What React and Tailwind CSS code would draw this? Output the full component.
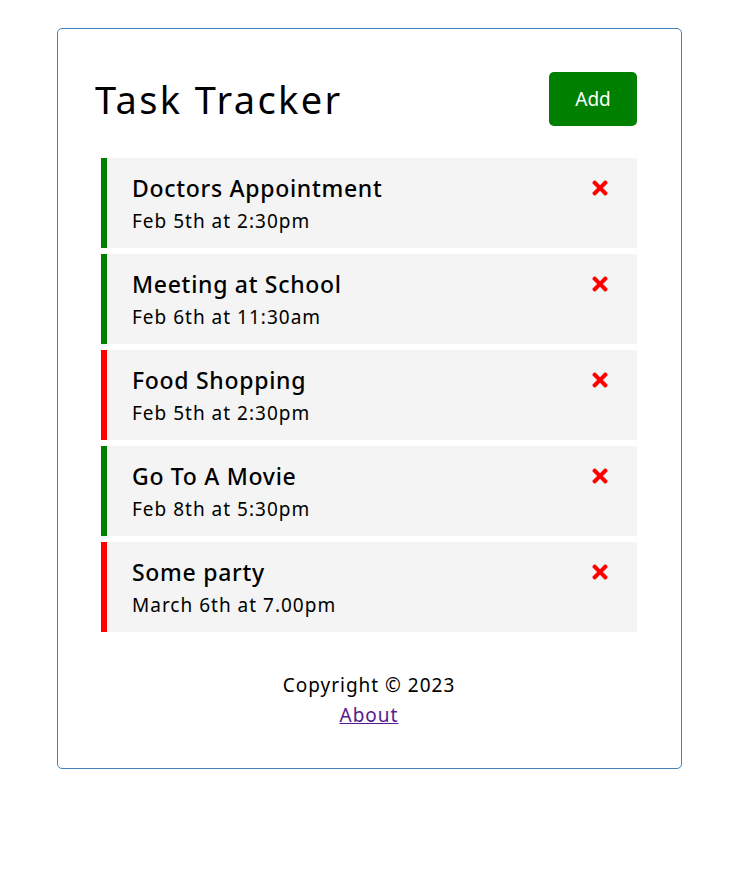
import { FaTimes } from "react-icons/fa";

const tasks = [
  { id: 1, text: "Doctors Appointment", day: "Feb 5th at 2:30pm", reminder: true },
  { id: 2, text: "Meeting at School", day: "Feb 6th at 11:30am", reminder: true },
  { id: 3, text: "Food Shopping", day: "Feb 5th at 2:30pm", reminder: false },
  { id: 4, text: "Go To A Movie", day: "Feb 8th at 5:30pm", reminder: true },
  { id: 5, text: "Some party", day: "March 6th at 7.00pm", reminder: false },
];

function Task({ task }) {
  return (
    <div
      className={`h-[90px] bg-[#f4f4f4] border-l-[6px] pl-[25px] pr-[26px] pt-[14px] ${
        task.reminder ? "border-[#008000]" : "border-[#ff0000]"
      }`}
    >
      <h3 className="flex items-center justify-between text-[23px] leading-[32px] font-medium tracking-[0.7px]">
        {task.text}
        <FaTimes className="text-[#ff0000] text-[22px]" />
      </h3>
      <p className="mt-[2px] text-[19px] leading-[30px] tracking-[1px]">{task.day}</p>
    </div>
  );
}

export default function App() {
  return (
    <div className="min-h-[870px] bg-white pt-[28px] text-black" style={{ fontFamily: '"Noto Sans", sans-serif' }}>
      <div className="ml-[57px] w-[625px] border border-[#4682b4] rounded-[5px] pt-[43px] pb-[38px] pl-[43px] pr-[44px]">
        <header className="flex items-center justify-between h-[54px] -ml-[6px]">
          <h1 className="text-[38px] font-normal leading-none tracking-[2.4px]">Task Tracker</h1>
          <button className="w-[88px] h-[54px] bg-[#008000] text-white rounded-[5px] text-[19px]">
            Add
          </button>
        </header>
        <div className="mt-[32px] flex flex-col gap-[6px]">
          {tasks.map((t) => (
            <Task key={t.id} task={t} />
          ))}
        </div>
        <footer className="mt-[38px] text-center text-[19px] leading-[30px] tracking-[1px]">
          <p>Copyright &copy; 2023</p>
          <a href="#" className="underline text-[#551a8b]">
            About
          </a>
        </footer>
      </div>
    </div>
  );
}
